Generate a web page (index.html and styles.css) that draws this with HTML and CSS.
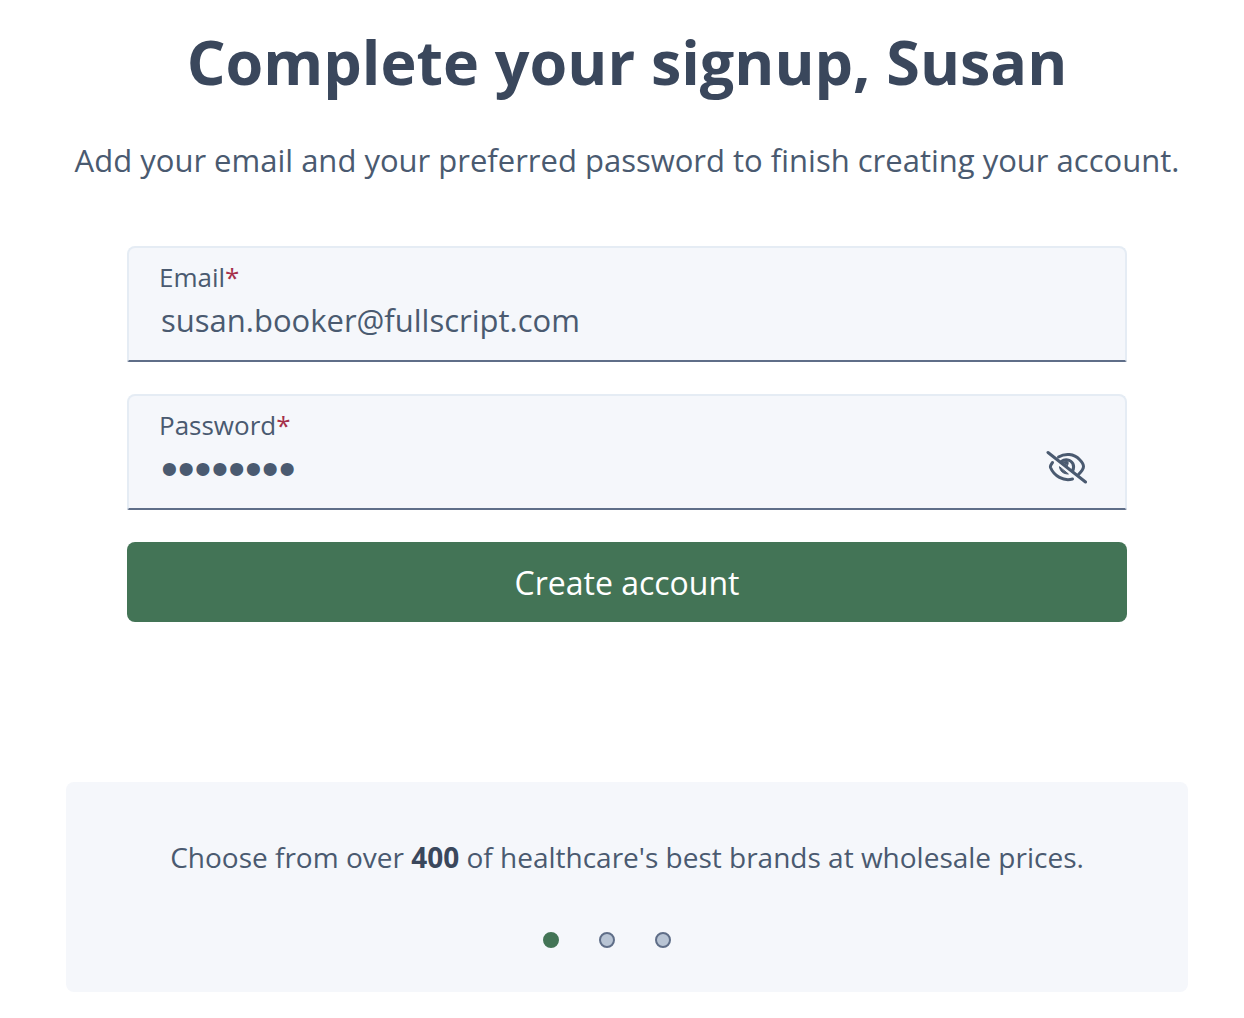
FILE: index.html
```
<!DOCTYPE html>
<html lang="en">
<head>
  <meta charset="UTF-8">
  <meta name="viewport" content="width=device-width,initial-scale=1">
  <title>Complete your signup</title>
  <link rel="stylesheet" href="styles.css">
</head>
<body>
  <main class="signup">
    <h1 class="title">Complete your signup, Susan</h1>
    <p class="subtitle">Add your email and your preferred password to finish creating your account.</p>

    <form class="form">
      <div class="field">
        <label class="label" for="email">Email<span class="required">*</span></label>
        <input class="input" id="email" type="email" value="susan.booker@fullscript.com">
      </div>

      <div class="field">
        <label class="label" for="password">Password<span class="required">*</span></label>
        <input class="input masked" id="password" type="password" value="password">
        <button class="toggle" type="button" aria-label="Show password">
          <svg width="42" height="34" viewBox="0 0 42 34" fill="none" stroke="currentColor" stroke-width="3" stroke-linecap="round">
            <path d="M2 2.5L39.5 32"/>
            <path d="M12.5 7C19 3 28 3.5 33.5 9.5C36 12 37.5 15 37.5 16.5C37.5 18.5 35.5 21.5 32.5 24.5"/>
            <path d="M6.5 12.5C5 14.5 4 16 4.5 17.5C8 26 17.5 31.5 26.5 29"/>
            <path d="M15.5 11.5C19 8.5 24.5 9.5 26.8 13.5C28 16 28 18.5 26.5 21"/>
            <path d="M17 12.5L21 10.5C22.5 12 22.5 13.5 21.5 15.5Z" fill="currentColor" stroke-width="1"/>
            <path d="M13.5 17C14 21 17 24 22 24Z" fill="currentColor" stroke-width="1"/>
          </svg>
        </button>
      </div>

      <button class="submit" type="submit">Create account</button>
    </form>

    <section class="promo">
      <p class="promoText">Choose from over <strong>400</strong> of healthcare's best brands at wholesale prices.</p>
      <div class="dots">
        <button class="dot active" type="button" aria-label="Slide 1"></button>
        <button class="dot" type="button" aria-label="Slide 2"></button>
        <button class="dot" type="button" aria-label="Slide 3"></button>
      </div>
    </section>
  </main>
</body>
</html>
```
FILE: styles.css
```
:root {
  --text: #4a5a70;
  --text-dark: #3a475c;
  --line: #5f6e88;
  --border: #e5ecf4;
  --surface: #f5f7fb;
  --green: #437456;
  --red: #a5304a;
}
* { margin:0; padding:0; box-sizing:border-box; }
body {
  background:#fff;
  color:var(--text);
  font-family:"Open Sans",sans-serif;
}
button, input { font:inherit; color:inherit; }
button { border:none; cursor:pointer; }

.signup {
  padding:22px 56px 24px 66px;
  text-align:center;
}
.title {
  font-size:61px;
  line-height:80px;
  font-weight:700;
  color:var(--text-dark);
}
.subtitle {
  margin-top:34px;
  font-size:31px;
  line-height:48px;
}

/* FORM */
.form {
  display:flex;
  flex-direction:column;
  gap:32px;
  max-width:1000px;
  margin:62px auto 0;
}
.field {
  position:relative;
  display:flex;
  flex-direction:column;
  padding:11px 30px 15px;
  background:var(--surface);
  border:2px solid var(--border);
  border-bottom-color:var(--line);
  border-radius:8px 8px 2px 2px;
  text-align:left;
}
.label {
  font-size:26px;
  line-height:36px;
}
.required { color:var(--red); }
.input {
  width:100%;
  height:50px;
  padding:0 2px;
  background:none;
  border:none;
  outline:none;
  font-size:31px;
}
.masked {
  font-family:"Liberation Sans",sans-serif;
  font-size:48px;
}
.toggle {
  position:absolute;
  right:37px;
  bottom:24px;
  height:34px;
  background:none;
}
.toggle svg { display:block; }
.submit {
  height:80px;
  background:var(--green);
  border-radius:8px;
  color:#fff;
  font-size:32px;
  font-weight:500;
}

/* PROMO */
.promo {
  margin-top:160px;
  padding:55px 32px 44px;
  background:var(--surface);
  border-radius:8px;
}
.promoText {
  font-size:28px;
  line-height:40px;
}
.promoText strong { color:var(--text-dark); }
.dots {
  display:flex;
  justify-content:center;
  margin-top:55px;
}
.dot {
  width:16px;
  height:16px;
  margin-right:40px;
  background:#b8c4d4;
  border:2px solid var(--line);
  border-radius:50%;
}
.dot.active {
  background:var(--green);
  border-color:var(--green);
}
```
